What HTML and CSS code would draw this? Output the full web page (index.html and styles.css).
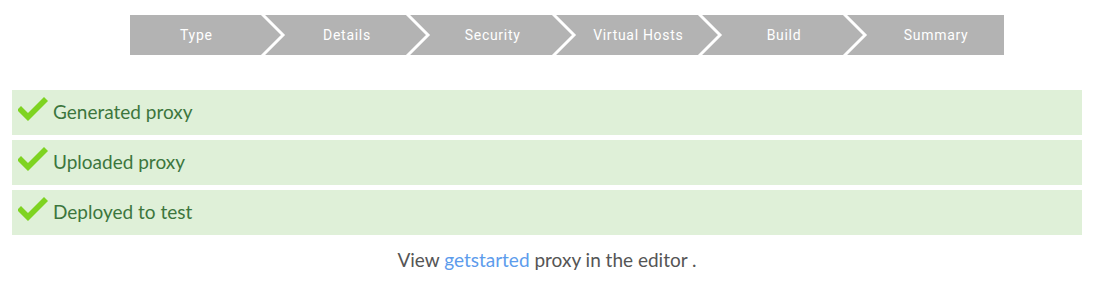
FILE: index.html
```html
<!DOCTYPE html>
<html lang="en">
<head>
  <meta charset="UTF-8" />
  <title>Proxy Wizard</title>
  <link rel="stylesheet" href="styles.css">
</head>
<body>

<div class="steps">
  <div class="step">Type<svg class="sep" width="28" height="40" viewBox="0 0 28 40"><polyline points="3,-1 24,20 3,41" /></svg></div>
  <div class="step">Details<svg class="sep" width="28" height="40" viewBox="0 0 28 40"><polyline points="3,-1 24,20 3,41" /></svg></div>
  <div class="step">Security<svg class="sep" width="28" height="40" viewBox="0 0 28 40"><polyline points="3,-1 24,20 3,41" /></svg></div>
  <div class="step">Virtual Hosts<svg class="sep" width="28" height="40" viewBox="0 0 28 40"><polyline points="3,-1 24,20 3,41" /></svg></div>
  <div class="step">Build<svg class="sep" width="28" height="40" viewBox="0 0 28 40"><polyline points="3,-1 24,20 3,41" /></svg></div>
  <div class="step">Summary</div>
</div>

<!-- Progress messages -->
<div class="results">
  <div class="alert">
    <svg class="check" width="30" height="26" viewBox="0 0 30 26"><path d="M3 11 L10 18 L26 2 L30 6 L10 26 L-1 15 Z" /></svg>
    <span>Generated proxy</span>
  </div>
  <div class="alert">
    <svg class="check" width="30" height="26" viewBox="0 0 30 26"><path d="M3 11 L10 18 L26 2 L30 6 L10 26 L-1 15 Z" /></svg>
    <span>Uploaded proxy</span>
  </div>
  <div class="alert">
    <svg class="check" width="30" height="26" viewBox="0 0 30 26"><path d="M3 11 L10 18 L26 2 L30 6 L10 26 L-1 15 Z" /></svg>
    <span>Deployed to test</span>
  </div>
</div>

<p class="footer">View <a href="#">getstarted</a> proxy in the editor .</p>

</body>
</html>
```

FILE: styles.css
```css
* {
  margin: 0;
  padding: 0;
  box-sizing: border-box;
}

body {
  font-family: 'Lato', sans-serif;
  background-color: #fff;
  color: #555;
  padding: 15px 13px 0 12px;
}

.steps {
  display: flex;
  width: 874px;
  height: 40px;
  margin: 0 auto 35px 118px;
  background-color: #b3b3b3;
}

.step {
  flex: 0 0 16.6667%;
  position: relative;
  display: flex;
  align-items: center;
  justify-content: center;
  font-family: 'Roboto', sans-serif;
  font-size: 14px;
  letter-spacing: 0.7px;
  color: #fff;
}

.step + .step {
  padding-left: 10px;
}

.step:not(:last-child) {
  padding-right: 13px;
}

.step .sep {
  position: absolute;
  top: 0;
  right: -11px;
  z-index: 2;
}

.step .sep polyline {
  fill: none;
  stroke: #fff;
  stroke-width: 3;
}

.results {
  display: flex;
  flex-direction: column;
  gap: 5px;
}

.alert {
  display: flex;
  align-items: center;
  height: 45px;
  padding: 0 0 3px 5px;
  background-color: #dff0d8;
  color: #3c763d;
  font-size: 19px;
}

.alert .check {
  margin: -7px 5px 0 1px;
}

.alert .check path {
  fill: #7ed321;
}

.footer {
  text-align: center;
  font-size: 19px;
  margin-top: 13px;
  color: #555;
}

.footer a {
  color: #5d9cec;
  text-decoration: none;
}
```
